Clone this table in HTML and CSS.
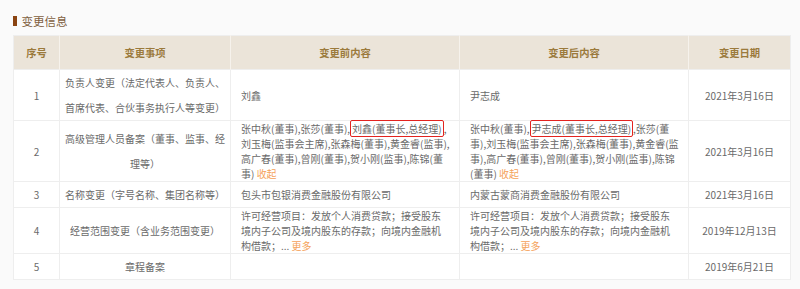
FILE: index.html
```html
<!DOCTYPE html>
<html lang="zh">
<head>
<meta charset="utf-8">
<title>变更信息</title>
<link rel="stylesheet" href="styles.css">
</head>
<body>
<div class="page">
  <div class="title"><span class="bar"></span><span class="title-text">变更信息</span></div>
  <table class="grid">
    <colgroup>
      <col class="c-no"><col class="c-item"><col class="c-before"><col class="c-after"><col class="c-date">
    </colgroup>
    <thead>
      <tr><th>序号</th><th>变更事项</th><th>变更前内容</th><th>变更后内容</th><th>变更日期</th></tr>
    </thead>
    <tbody>
      <tr>
        <td class="num">1</td>
        <td class="item">负责人变更（法定代表人、负责人、<br>首席代表、合伙事务执行人等变更）</td>
        <td class="txt">刘鑫</td>
        <td class="txt">尹志成</td>
        <td class="date">2021年3月16日</td>
      </tr>
      <tr>
        <td class="num">2</td>
        <td class="item">高级管理人员备案（董事、监事、经<br>理等）</td>
        <td class="txt">张中秋(董事),张莎(董事),<span class="hl">刘鑫(董事长,总经理)</span>,<br>刘玉梅(监事会主席),张森梅(董事),黄金睿(监事),<br>高广春(董事),曾刚(董事),贺小刚(监事),陈锦(董<br>事) <span class="link">收起</span></td>
        <td class="txt">张中秋(董事),<span class="hl">尹志成(董事长,总经理)</span>,张莎(董<br>事),刘玉梅(监事会主席),张森梅(董事),黄金睿(监<br>事),高广春(董事),曾刚(董事),贺小刚(监事),陈锦<br>(董事) <span class="link">收起</span></td>
        <td class="date">2021年3月16日</td>
      </tr>
      <tr>
        <td class="num">3</td>
        <td class="item">名称变更（字号名称、集团名称等）</td>
        <td class="txt">包头市包银消费金融股份有限公司</td>
        <td class="txt">内蒙古蒙商消费金融股份有限公司</td>
        <td class="date">2021年3月16日</td>
      </tr>
      <tr>
        <td class="num">4</td>
        <td class="item">经营范围变更（含业务范围变更）</td>
        <td class="txt">许可经营项目：发放个人消费贷款；接受股东<br>境内子公司及境内股东的存款；向境内金融机<br>构借款；... <span class="link">更多</span></td>
        <td class="txt">许可经营项目：发放个人消费贷款；接受股东<br>境内子公司及境内股东的存款；向境内金融机<br>构借款；... <span class="link">更多</span></td>
        <td class="date">2019年12月13日</td>
      </tr>
      <tr>
        <td class="num">5</td>
        <td class="item">章程备案</td>
        <td class="txt"></td>
        <td class="txt"></td>
        <td class="date">2019年6月21日</td>
      </tr>
    </tbody>
  </table>
</div>
</body>
</html>
```

FILE: styles.css
```css
html, body {
  margin: 0;
  padding: 0;
  background: #fafafa;
}
.page {
  padding: 13px 0 0 13px;
  font-family: "Noto Sans CJK SC", "Microsoft YaHei", sans-serif;
  color: #6a6a6a;
}
.title {
  display: flex;
  align-items: center;
  height: 16px;
  margin-bottom: 6px;
}
.bar {
  width: 3.5px;
  height: 10px;
  background: #8a4412;
  margin-right: 5px;
}
.title-text {
  font-size: 11.5px;
  color: #7f6040;
  line-height: 16px;
}
.grid {
  border-collapse: collapse;
  table-layout: fixed;
  width: 777px;
  background: #fff;
  font-size: 10px;
  border: 1px solid #eeeeee;
}
.c-no { width: 46px; }
.c-item { width: 171px; }
.c-before { width: 229px; }
.c-after { width: 229px; }
.c-date { width: 102px; }
.grid th {
  height: 33px;
  background: #ebe4d9;
  color: #9b7a3c;
  font-weight: bold;
  font-size: 10.3px;
  text-align: center;
  border-left: 1px solid #f6f2ec;
  padding: 0;
}
.grid th:first-child { border-left: none; }
.grid td {
  border: 1px solid #eeeeee;
  padding: 0 10px;
  vertical-align: middle;
}
.grid td.num {
  text-align: center;
  line-height: 25px;
  padding: 0;
}
.grid td.item {
  text-align: center;
  line-height: 25px;
  padding: 0 3px;
}
.grid td.txt {
  text-align: left;
  line-height: 15px;
  white-space: nowrap;
}
.grid td.date {
  text-align: center;
  line-height: 25px;
  padding: 0;
}
.hl {
  border: 1.5px solid #e3231f;
  border-radius: 2px;
  padding: 0 1px;
}
.link {
  color: #f5a25a;
}
```
